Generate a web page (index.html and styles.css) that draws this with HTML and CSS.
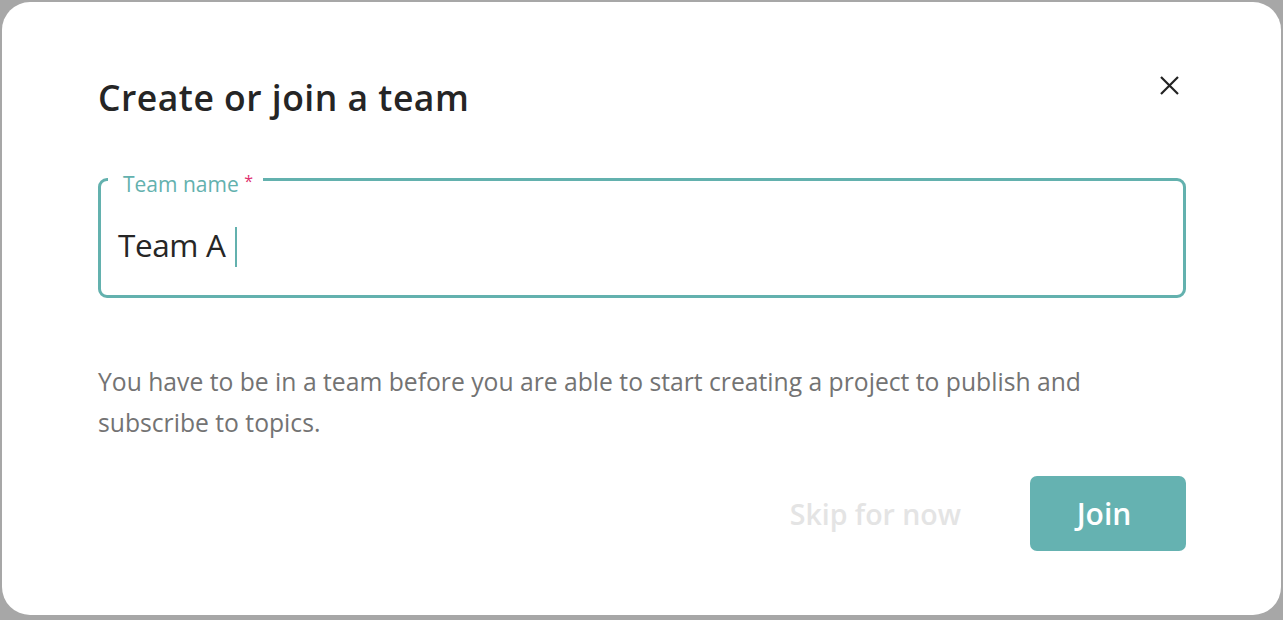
FILE: index.html
```html
<!DOCTYPE html>
<html lang="en">
<head>
<meta charset="utf-8">
<title>Create or join a team</title>
<link rel="stylesheet" href="styles.css">
</head>
<body>
<div class="dialog">
  <div class="header">
    <h1 class="title">Create or join a team</h1>
    <button class="close" aria-label="Close">
      <svg width="19" height="19" viewBox="0 0 19 19"><path d="M1 1 L18 18 M18 1 L1 18" stroke="#222" stroke-width="2.2" fill="none"/></svg>
    </button>
  </div>
  <fieldset class="field">
    <legend class="legend"><span class="label">Team name <span class="req">*</span></span></legend>
    <div class="value">Team A<span class="caret"></span></div>
  </fieldset>
  <p class="desc">You have to be in a team before you are able to start creating a project to publish and subscribe to topics.</p>
  <div class="actions">
    <button class="skip">Skip for now</button>
    <button class="join">Join</button>
  </div>
</div>
</body>
</html>
```
FILE: styles.css
```css
html, body {
  margin: 0;
  padding: 0;
  height: 100%;
}
body {
  background: #a7a7a7;
  font-family: "Open Sans", "Noto Sans", sans-serif;
  padding: 2px 2px 5px 2px;
  box-sizing: border-box;
}
.dialog {
  background: #fff;
  border-radius: 28px;
  height: 100%;
  box-sizing: border-box;
  padding: 74px 95px 0 96px;
}
.header {
  display: flex;
  justify-content: space-between;
  align-items: flex-start;
}
.title {
  margin: 0;
  font-size: 35.5px;
  line-height: 42px;
  letter-spacing: 0.5px;
  font-weight: 600;
  color: #252525;
}
.close {
  background: none;
  border: 0;
  padding: 0;
  margin: 0 7px 0 0;
  width: 19px;
  height: 19px;
  display: flex;
}
.field {
  margin: 60px 0 0 0;
  border: 3px solid #63b1ae;
  border-radius: 9px;
  height: 120px;
  box-sizing: border-box;
  padding: 0 17px;
  min-width: 0;
}
.legend {
  height: 3px;
  padding: 0 10px 0 15px;
  margin-left: -10px;
}
.label {
  display: block;
  position: relative;
  top: -5px;
  color: #63b1ae;
  font-size: 21px;
  line-height: 22px;
}
.req {
  color: #e0306e;
  font-size: 16px;
  vertical-align: top;
  line-height: 16px;
}
.value {
  font-size: 31.5px;
  letter-spacing: -0.4px;
  line-height: 40px;
  height: 40px;
  color: #262626;
  display: flex;
  margin-top: 44px;
}
.caret {
  display: block;
  width: 2px;
  height: 40px;
  background: #63b1ae;
  margin: 2px 0 0 10px;
}
.desc {
  margin: 63px 60px 0 0;
  font-size: 24.7px;
  line-height: 41px;
  color: #737373;
}
.actions {
  display: flex;
  justify-content: flex-end;
  align-items: center;
  margin-top: 33px;
  gap: 69px;
}
.skip {
  background: none;
  border: 0;
  padding: 0;
  font-family: inherit;
  font-size: 28.5px;
  font-weight: 600;
  color: #e4e4e4;
}
.join {
  background: #65b2b1;
  border: 0;
  border-radius: 7px;
  width: 156px;
  height: 75px;
  padding: 0 8px 0 0;
  font-family: inherit;
  font-size: 30px;
  font-weight: 600;
  color: #fff;
}
```
